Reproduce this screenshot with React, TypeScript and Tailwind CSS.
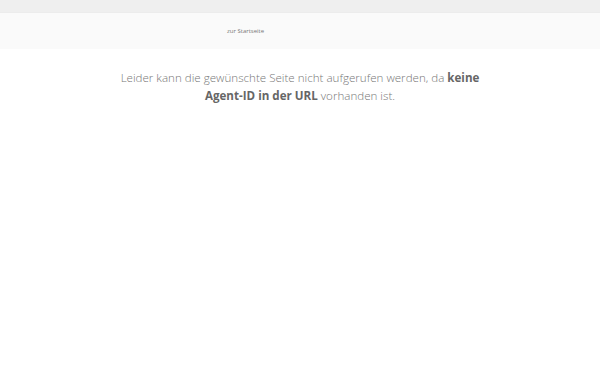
export default function App() {
  return (
    <div className="min-h-[375px] bg-white" style={{ fontFamily: '"Open Sans", sans-serif' }}>
      <div className="h-[12px] bg-[#efefef]" />
      <div className="h-[37px] bg-[#fafafa] border-t border-[#ececec] flex items-center">
        <div className="ml-[227px] text-[6px] text-[#777] leading-none">zur Startseite</div>
      </div>
      <div className="flex justify-center pt-[20px]">
        <p className="w-[380px] text-center text-[11.6px] leading-[18px] font-light text-[#777]">
          Leider kann die gewünschte Seite nicht aufgerufen werden, da{' '}
          <strong className="font-bold text-[#666]">keine Agent-ID in der URL</strong> vorhanden ist.
        </p>
      </div>
    </div>
  );
}
